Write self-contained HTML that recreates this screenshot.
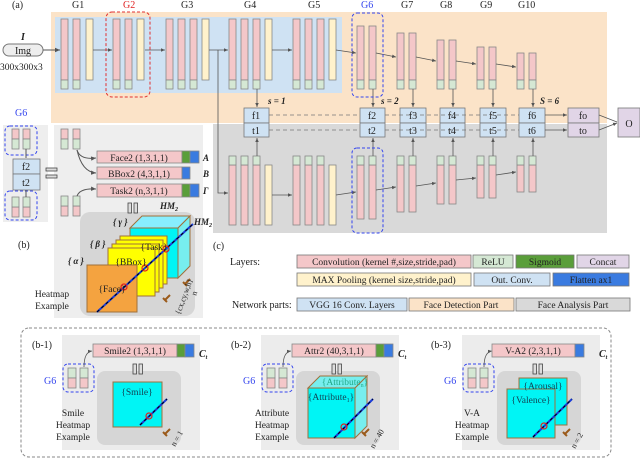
<!DOCTYPE html>
<html><head><meta charset="utf-8"><style>
html,body{margin:0;padding:0;background:#fff}
svg,svg text{font-family:"Liberation Serif","DejaVu Serif",serif}
</style></head><body>
<svg width="640" height="460" viewBox="0 0 640 460" xmlns="http://www.w3.org/2000/svg" font-family="Liberation Serif, serif">
<defs>
<marker id="ar" markerWidth="6" markerHeight="6" refX="5" refY="3" orient="auto"><path d="M0,0.8 L5,3 L0,5.2z" fill="#555"/></marker>
</defs>
<g font-size="10" fill="#222" font-family="Liberation Serif, serif">
<rect x="51" y="12" width="556" height="111" fill="#fbe3c8"/>
<rect x="55" y="17" width="287" height="76" fill="#cfe2f3"/>
<rect x="213" y="124" width="394" height="109" fill="#d9d9d9"/>

<text x="12" y="8">(a)</text>
<text x="72" y="8">G1</text><text x="123" y="8" fill="#e02020">G2</text><text x="181" y="8">G3</text>
<text x="244" y="8">G4</text><text x="308" y="8">G5</text><text x="361" y="8" fill="#3344ee">G6</text>
<text x="401" y="8">G7</text><text x="440" y="8">G8</text><text x="480" y="8">G9</text><text x="518" y="8">G10</text>

<text x="21" y="40" font-style="italic" font-weight="bold">I</text>
<rect x="3" y="44" width="40" height="12" rx="6" fill="#eee" stroke="#777"/>
<text x="23" y="54" text-anchor="middle">Img</text>
<text x="0" y="70" font-size="9.5">300x300x3</text>
<line x1="43" y1="50" x2="60" y2="50" stroke="#555" marker-end="url(#ar)"/>

<g stroke="#888" stroke-width="0.8">
<g fill="#f4c7c9">
<rect x="61" y="19" width="7" height="61"/><rect x="73" y="19" width="7" height="61"/>
<rect x="113" y="19" width="7" height="61"/><rect x="125" y="19" width="7" height="61"/>
<rect x="166" y="19" width="7" height="61"/><rect x="178" y="19" width="7" height="61"/><rect x="190" y="19" width="7" height="61"/>
<rect x="229" y="19" width="7" height="61"/><rect x="241" y="19" width="7" height="61"/><rect x="253" y="19" width="7" height="61"/>
<rect x="293" y="19" width="7" height="61"/><rect x="305" y="19" width="7" height="61"/><rect x="317" y="19" width="7" height="61"/>
<rect x="357" y="26" width="7" height="54"/><rect x="369" y="26" width="7" height="54"/>
<rect x="397" y="33" width="7" height="47"/><rect x="409" y="33" width="7" height="47"/>
<rect x="437" y="40" width="7" height="40"/><rect x="449" y="40" width="7" height="40"/>
<rect x="477" y="47" width="7" height="33"/><rect x="489" y="47" width="7" height="33"/>
<rect x="517" y="53" width="7" height="27"/><rect x="529" y="53" width="7" height="27"/>
</g>
<g fill="#d5e8d4">
<rect x="61" y="80" width="7" height="9"/><rect x="73" y="80" width="7" height="9"/>
<rect x="113" y="80" width="7" height="9"/><rect x="125" y="80" width="7" height="9"/>
<rect x="166" y="80" width="7" height="9"/><rect x="178" y="80" width="7" height="9"/><rect x="190" y="80" width="7" height="9"/>
<rect x="229" y="80" width="7" height="9"/><rect x="241" y="80" width="7" height="9"/><rect x="253" y="80" width="7" height="9"/>
<rect x="293" y="80" width="7" height="9"/><rect x="305" y="80" width="7" height="9"/><rect x="317" y="80" width="7" height="9"/>
<rect x="357" y="80" width="7" height="9"/><rect x="369" y="80" width="7" height="9"/>
<rect x="397" y="80" width="7" height="9"/><rect x="409" y="80" width="7" height="9"/>
<rect x="437" y="80" width="7" height="9"/><rect x="449" y="80" width="7" height="9"/>
<rect x="477" y="80" width="7" height="9"/><rect x="489" y="80" width="7" height="9"/>
<rect x="517" y="80" width="7" height="9"/><rect x="529" y="80" width="7" height="9"/>
</g>
<g fill="#fff2cc">
<rect x="86" y="19" width="7" height="61"/><rect x="137" y="19" width="7" height="61"/>
<rect x="202" y="19" width="7" height="61"/><rect x="265" y="19" width="7" height="61"/><rect x="329" y="19" width="7" height="61"/>
<rect x="265" y="165" width="7" height="60"/><rect x="329" y="165" width="7" height="60"/>
</g>
<g fill="#f4c7c9">
<rect x="229" y="165" width="7" height="60"/><rect x="241" y="165" width="7" height="60"/><rect x="253" y="165" width="7" height="60"/>
<rect x="293" y="165" width="7" height="60"/><rect x="305" y="165" width="7" height="60"/><rect x="317" y="165" width="7" height="60"/>
<rect x="357" y="165" width="7" height="54"/><rect x="369" y="165" width="7" height="54"/>
<rect x="397" y="165" width="7" height="47"/><rect x="409" y="165" width="7" height="47"/>
<rect x="437" y="165" width="7" height="39"/><rect x="449" y="165" width="7" height="39"/>
<rect x="477" y="165" width="7" height="33"/><rect x="489" y="165" width="7" height="33"/>
<rect x="517" y="165" width="7" height="27"/><rect x="529" y="165" width="7" height="27"/>
</g>
<g fill="#d5e8d4">
<rect x="229" y="156" width="7" height="9"/><rect x="241" y="156" width="7" height="9"/><rect x="253" y="156" width="7" height="9"/>
<rect x="293" y="156" width="7" height="9"/><rect x="305" y="156" width="7" height="9"/><rect x="317" y="156" width="7" height="9"/>
<rect x="357" y="156" width="7" height="9"/><rect x="369" y="156" width="7" height="9"/>
<rect x="397" y="156" width="7" height="9"/><rect x="409" y="156" width="7" height="9"/>
<rect x="437" y="156" width="7" height="9"/><rect x="449" y="156" width="7" height="9"/>
<rect x="477" y="156" width="7" height="9"/><rect x="489" y="156" width="7" height="9"/>
<rect x="517" y="156" width="7" height="9"/><rect x="529" y="156" width="7" height="9"/>
</g>
<g fill="#cfe2f3" stroke="#777">
<rect x="244" y="108" width="25" height="15"/><rect x="244" y="123" width="25" height="14"/>
<rect x="360" y="108" width="25" height="15"/><rect x="360" y="123" width="25" height="14"/>
<rect x="400" y="108" width="26" height="15"/><rect x="400" y="123" width="26" height="14"/>
<rect x="440" y="108" width="25" height="15"/><rect x="440" y="123" width="25" height="14"/>
<rect x="480" y="108" width="26" height="15"/><rect x="480" y="123" width="26" height="14"/>
<rect x="519" y="108" width="26" height="15"/><rect x="519" y="123" width="26" height="14"/>
</g>
<g fill="#e1d5e7" stroke="#777">
<rect x="568" y="108" width="31" height="15"/><rect x="568" y="123" width="31" height="14"/>
<rect x="618" y="108" width="22" height="29"/>
</g>
</g>
<g font-size="10" text-anchor="middle">
<text x="256" y="119">f1</text><text x="256" y="134">t1</text>
<text x="372" y="119">f2</text><text x="372" y="134">t2</text>
<text x="413" y="119">f3</text><text x="413" y="134">t3</text>
<text x="452" y="119">f4</text><text x="452" y="134">t4</text>
<text x="493" y="119">f5</text><text x="493" y="134">t5</text>
<text x="532" y="119">f6</text><text x="532" y="134">t6</text>
<text x="583" y="119">fo</text><text x="583" y="134">to</text>
<text x="629" y="127">O</text>
</g>
<g font-size="9" font-style="italic" font-weight="bold"><text x="268" y="104">s = 1</text><text x="381" y="104">s = 2</text><text x="540" y="104">S = 6</text></g>

<g stroke="#555" stroke-width="0.8" fill="none">
<line x1="93" y1="50" x2="112" y2="50" marker-end="url(#ar)"/>
<line x1="145" y1="50" x2="165" y2="50" marker-end="url(#ar)"/>
<line x1="209" y1="50" x2="228" y2="50" marker-end="url(#ar)"/>
<line x1="272" y1="50" x2="292" y2="50" marker-end="url(#ar)"/>
<line x1="336" y1="50" x2="356" y2="53" marker-end="url(#ar)"/>
<line x1="376" y1="53" x2="396" y2="57" marker-end="url(#ar)"/>
<line x1="416" y1="57" x2="436" y2="61" marker-end="url(#ar)"/>
<line x1="456" y1="61" x2="476" y2="64" marker-end="url(#ar)"/>
<line x1="496" y1="64" x2="516" y2="67" marker-end="url(#ar)"/>
<polyline points="218,50 218,193 228,193" marker-end="url(#ar)"/>
<line x1="272" y1="195" x2="292" y2="195" marker-end="url(#ar)"/>
<line x1="336" y1="195" x2="356" y2="192" marker-end="url(#ar)"/>
<line x1="376" y1="190" x2="396" y2="187" marker-end="url(#ar)"/>
<line x1="416" y1="186" x2="436" y2="183" marker-end="url(#ar)"/>
<line x1="456" y1="180" x2="476" y2="178" marker-end="url(#ar)"/>
<line x1="496" y1="175" x2="516" y2="172" marker-end="url(#ar)"/>
<line x1="257" y1="89" x2="257" y2="107" marker-end="url(#ar)"/>
<line x1="373" y1="89" x2="373" y2="107" marker-end="url(#ar)"/>
<line x1="413" y1="89" x2="413" y2="107" marker-end="url(#ar)"/>
<line x1="453" y1="89" x2="453" y2="107" marker-end="url(#ar)"/>
<line x1="493" y1="89" x2="493" y2="107" marker-end="url(#ar)"/>
<line x1="533" y1="89" x2="533" y2="107" marker-end="url(#ar)"/>
<line x1="257" y1="156" x2="257" y2="138" marker-end="url(#ar)"/>
<line x1="373" y1="156" x2="373" y2="138" marker-end="url(#ar)"/>
<line x1="413" y1="156" x2="413" y2="138" marker-end="url(#ar)"/>
<line x1="453" y1="156" x2="453" y2="138" marker-end="url(#ar)"/>
<line x1="493" y1="156" x2="493" y2="138" marker-end="url(#ar)"/>
<line x1="533" y1="156" x2="533" y2="138" marker-end="url(#ar)"/>
<line x1="545" y1="115" x2="567" y2="115" marker-end="url(#ar)"/>
<line x1="545" y1="130" x2="567" y2="130" marker-end="url(#ar)"/>
<polyline points="599,115 617,122"/><polyline points="599,130 617,123" marker-end="url(#ar)"/>
<g stroke-dasharray="4,3" stroke="#777">
<line x1="269" y1="115" x2="360" y2="115"/><line x1="269" y1="130" x2="360" y2="130"/>
<line x1="385" y1="115" x2="519" y2="115"/><line x1="385" y1="130" x2="519" y2="130"/>
</g>
<g stroke-dasharray="3,2" stroke="#e03030" stroke-width="1"><rect x="106" y="12" width="44" height="85" rx="6"/></g>
<g stroke-dasharray="3,2" stroke="#3344ee" stroke-width="1">
<rect x="352" y="13" width="31" height="84" rx="5"/><rect x="352" y="148" width="31" height="85" rx="5"/>
</g>
</g>

<!-- (b) left -->
<rect x="3" y="125" width="45" height="97" fill="#eeeeee"/>
<rect x="54" y="125" width="149" height="193" fill="#eeeeee"/>
<rect x="80" y="212" width="115" height="104" rx="10" fill="#d6d6d6"/>
<text x="15" y="116" fill="#3344ee">G6</text>
<g stroke="#888" stroke-width="0.8">
<g fill="#f4c7c9"><rect x="12" y="129" width="7" height="10"/><rect x="23" y="129" width="7" height="10"/><rect x="12" y="207" width="7" height="10"/><rect x="23" y="207" width="7" height="10"/>
<rect x="61" y="129" width="7" height="10"/><rect x="73" y="129" width="7" height="10"/><rect x="61" y="206" width="7" height="10"/><rect x="73" y="206" width="7" height="10"/></g>
<g fill="#d5e8d4"><rect x="12" y="139" width="7" height="10"/><rect x="23" y="139" width="7" height="10"/><rect x="12" y="197" width="7" height="10"/><rect x="23" y="197" width="7" height="10"/>
<rect x="61" y="139" width="7" height="10"/><rect x="73" y="139" width="7" height="10"/><rect x="61" y="196" width="7" height="10"/><rect x="73" y="196" width="7" height="10"/></g>
<g fill="#cfe2f3" stroke="#777"><rect x="13" y="159" width="27" height="15"/><rect x="13" y="174" width="27" height="16"/></g>
<g fill="#f4c7c9"><rect x="97" y="151" width="85" height="12"/><rect x="97" y="167" width="85" height="12"/><rect x="97" y="184" width="85" height="13"/></g>
<g fill="#5a9e3a"><rect x="182" y="151" width="8" height="12"/><rect x="182" y="184" width="8" height="13"/></g>
<g fill="#3a7be0"><rect x="190" y="151" width="9" height="12"/><rect x="182" y="167" width="8" height="12"/><rect x="190" y="184" width="9" height="13"/></g>
<g fill="#ddd" stroke="#444"><rect x="46" y="168" width="11" height="3"/><rect x="46" y="175" width="11" height="3"/>
<rect x="128" y="203" width="3.5" height="10"/><rect x="134" y="203" width="3.5" height="10"/></g>
</g>
<g font-size="10" text-anchor="middle"><text x="26" y="170">f2</text><text x="26" y="186">t2</text></g>
<g fill="none" stroke-width="1"><g stroke="#3344ee" stroke-dasharray="3,2"><rect x="5" y="126" width="32" height="29" rx="5"/><rect x="5" y="191" width="32" height="29" rx="5"/></g>
<g stroke="#555"><line x1="26" y1="149" x2="26" y2="158"/><line x1="26" y1="190" x2="26" y2="197"/>
<path d="M77,150 Q80,160 96,158" marker-end="url(#ar)"/><path d="M77,150 Q82,172 96,173" marker-end="url(#ar)"/><path d="M77,196 Q80,188 96,189" marker-end="url(#ar)"/></g></g>
<g font-size="9.5" text-anchor="middle"><text x="139" y="161">Face2 (1,3,1,1)</text><text x="139" y="177">BBox2 (4,3,1,1)</text><text x="139" y="194">Task2 (n,3,1,1)</text></g>
<g font-size="9" font-style="italic" font-weight="bold"><text x="203" y="161">A</text><text x="203" y="177">B</text><text x="203" y="194">Γ</text>
<text x="160" y="209">HM<tspan font-size="6" dy="2">2</tspan></text><text x="194" y="225">HM<tspan font-size="6" dy="2">2</tspan></text>
<text x="113" y="225">{ γ }</text><text x="90" y="247">{ β }</text><text x="68" y="264">{ α }</text></g>
<text x="18" y="248">(b)</text>
<g stroke="#a0703a" stroke-width="1">
<polygon points="130,228 142,216 190,216 178,228" fill="#8ef"/>
<polygon points="178,228 190,216 190,266 178,278" fill="#7ee"/>
<rect x="130" y="228" width="48" height="50" fill="#00f5f5"/>
<rect x="120" y="236" width="47" height="48" fill="#ffff00"/><rect x="116" y="240" width="47" height="48" fill="#ffff00"/>
<rect x="112" y="244" width="47" height="48" fill="#ffff00"/><rect x="108" y="248" width="47" height="48" fill="#ffff00"/>
<rect x="87" y="265" width="50" height="47" fill="#f4a340"/>
</g>
<line x1="97" y1="312" x2="193" y2="224" stroke="#1a3cd8" stroke-width="2"/>
<line x1="97" y1="312" x2="193" y2="224" stroke="#000" stroke-width="1" stroke-dasharray="3,3"/>
<g fill="none" stroke="#e02020" stroke-width="1.2"><circle cx="166" cy="249" r="3"/><circle cx="145" cy="268" r="3"/><circle cx="124" cy="287" r="3"/></g>
<g font-size="9.5" text-anchor="middle"><text x="154" y="250">{Task}</text><text x="131" y="265">{BBox}</text><text x="112" y="292">{Face}</text>
<text x="52" y="297">Heatmap</text><text x="52" y="309">Example</text></g>
<g stroke="#9a5a1a" stroke-width="2" fill="none"><path d="M183,282 l4,4 m-2,-2 l5,-5"/><path d="M163,298 l4,4 m-2,-2 l5,-5"/></g>
<text x="196" y="296" font-size="8" transform="rotate(-70 196 296)">n</text>
<text x="180" y="315" font-size="8" transform="rotate(-70 180 315)">{cx,cy,w,h}</text>

<!-- (c) legend -->
<text x="213" y="249">(c)</text>
<text x="230" y="265">Layers:</text>
<text x="232" y="308">Network parts:</text>
<g stroke="#777" stroke-width="0.8">
<rect x="297" y="255" width="174" height="13" fill="#f4c7c9"/><rect x="473" y="255" width="40" height="13" fill="#d5e8d4"/>
<rect x="516" y="255" width="58" height="13" fill="#5a9e3a"/><rect x="577" y="255" width="52" height="13" fill="#e1d5e7"/>
<rect x="297" y="273" width="174" height="13" fill="#fff2cc"/><rect x="474" y="273" width="76" height="13" fill="#cfe2f3"/>
<rect x="553" y="273" width="76" height="13" fill="#3a7be0"/>
<rect x="297" y="298" width="110" height="13" fill="#cfe2f3"/><rect x="409" y="298" width="105" height="13" fill="#fbe3c8"/>
<rect x="516" y="298" width="114" height="13" fill="#d9d9d9"/>
</g>
<g font-size="9.5" text-anchor="middle">
<text x="384" y="265">Convolution (kernel #,size,stride,pad)</text><text x="493" y="265">ReLU</text>
<text x="545" y="265">Sigmoid</text><text x="603" y="265">Concat</text>
<text x="384" y="283">MAX Pooling (kernel size,stride,pad)</text><text x="512" y="283">Out. Conv.</text>
<text x="591" y="283">Flatten ax1</text>
<text x="352" y="308">VGG 16 Conv. Layers</text><text x="461" y="308">Face Detection Part</text><text x="573" y="308">Face Analysis Part</text>
</g>

<!-- bottom section -->
<rect x="21" y="328" width="590" height="129" rx="8" fill="none" stroke="#888" stroke-dasharray="3,2"/>
<g id="sub">
<rect x="62" y="335" width="138" height="115" fill="#ececec"/>
<rect x="97" y="371" width="84" height="74" rx="8" fill="#d6d6d6"/>
<g stroke="#888" stroke-width="0.8">
<rect x="68" y="368" width="8" height="10" fill="#d5e8d4"/><rect x="80" y="368" width="8" height="10" fill="#d5e8d4"/>
<rect x="68" y="378" width="8" height="10" fill="#f4c7c9"/><rect x="80" y="378" width="8" height="10" fill="#f4c7c9"/>
<g fill="#ddd" stroke="#444"><rect x="133" y="364" width="3.5" height="10"/><rect x="139" y="364" width="3.5" height="10"/></g>
</g>
<rect x="63" y="364" width="31" height="28" rx="5" fill="none" stroke="#3344ee" stroke-dasharray="3,2"/>
<path d="M84,367 Q84,352 92,351" fill="none" stroke="#555" stroke-width="0.8" marker-end="url(#ar)"/>
<text x="44" y="384" fill="#3344ee">G6</text>
<text x="199" y="357" font-size="10" font-weight="bold" font-style="italic">C<tspan font-size="6" dy="2">t</tspan></text>
<g stroke="#9a5a1a" stroke-width="2" fill="none"><path d="M163,432 l4,4 m-2,-2 l5,-5"/></g>
</g>
<use href="#sub" x="199"/><use href="#sub" x="400"/>
<g stroke="#888" stroke-width="0.8">
<rect x="93" y="344" width="84" height="13" fill="#f4c7c9"/><rect x="177" y="344" width="8" height="13" fill="#5a9e3a"/><rect x="185" y="344" width="9" height="13" fill="#3a7be0"/>
<rect x="292" y="344" width="84" height="13" fill="#f4c7c9"/><rect x="376" y="344" width="8" height="13" fill="#5a9e3a"/><rect x="384" y="344" width="9" height="13" fill="#3a7be0"/>
<rect x="492" y="344" width="83" height="13" fill="#f4c7c9"/><rect x="575" y="344" width="9" height="13" fill="#3a7be0"/>
</g>
<g font-size="9.5" text-anchor="middle">
<text x="135" y="354">Smile2 (1,3,1,1)</text><text x="334" y="354">Attr2 (40,3,1,1)</text><text x="533" y="354">V-A2 (2,3,1,1)</text>
</g>
<g font-size="10"><text x="32" y="348">(b-1)</text><text x="231" y="348">(b-2)</text><text x="431" y="348">(b-3)</text></g>
<g font-size="9.5" text-anchor="middle">
<text x="73" y="416">Smile</text><text x="73" y="428">Heatmap</text><text x="73" y="440">Example</text>
<text x="272" y="416">Attribute</text><text x="272" y="428">Heatmap</text><text x="272" y="440">Example</text>
<text x="472" y="416">V-A</text><text x="472" y="428">Heatmap</text><text x="472" y="440">Example</text>
</g>
<g stroke="#a0703a" stroke-width="1">
<rect x="113" y="382" width="49" height="45" fill="#00f5f5"/>
<polygon points="308,388 320,376 367,376 355,388" fill="#7ee"/>
<polygon points="355,388 367,376 367,426 355,438" fill="#7ee"/>
<rect x="308" y="388" width="47" height="50" fill="#00f5f5"/>
<rect x="519" y="378" width="48" height="47" fill="#00f5f5"/>
<rect x="507" y="389" width="48" height="49" fill="#00f5f5"/>
</g>
<g stroke="#1a3cd8" stroke-width="2"><line x1="140" y1="425" x2="167" y2="399"/><line x1="334" y1="438" x2="373" y2="399"/><line x1="533" y1="437" x2="572" y2="399"/></g>
<g stroke="#000" stroke-width="1" stroke-dasharray="3,3"><line x1="140" y1="425" x2="167" y2="399"/><line x1="334" y1="438" x2="373" y2="399"/><line x1="533" y1="437" x2="572" y2="399"/></g>
<g fill="none" stroke="#e02020" stroke-width="1.2"><circle cx="149" cy="416" r="3"/><circle cx="344" cy="427" r="3"/><circle cx="544" cy="426" r="3"/></g>
<g font-size="9.5" text-anchor="middle" fill="#145">
<text x="137" y="395">{Smile}</text><text x="345" y="385" fill="#2a8">{Attribute<tspan font-size="6" dy="2">n</tspan><tspan dy="-2">}</tspan></text>
<text x="331" y="400">{Attribute<tspan font-size="6" dy="2">1</tspan><tspan dy="-2">}</tspan></text>
<text x="543" y="389">{Arousal}</text><text x="531" y="403">{Valence}</text>
</g>
<g font-size="8"><text x="175" y="447" transform="rotate(-60 175 447)">n = 1</text><text x="374" y="449" transform="rotate(-60 374 449)">n = 40</text><text x="575" y="449" transform="rotate(-60 575 449)">n = 2</text></g>
</g>
</svg>
</body></html>
